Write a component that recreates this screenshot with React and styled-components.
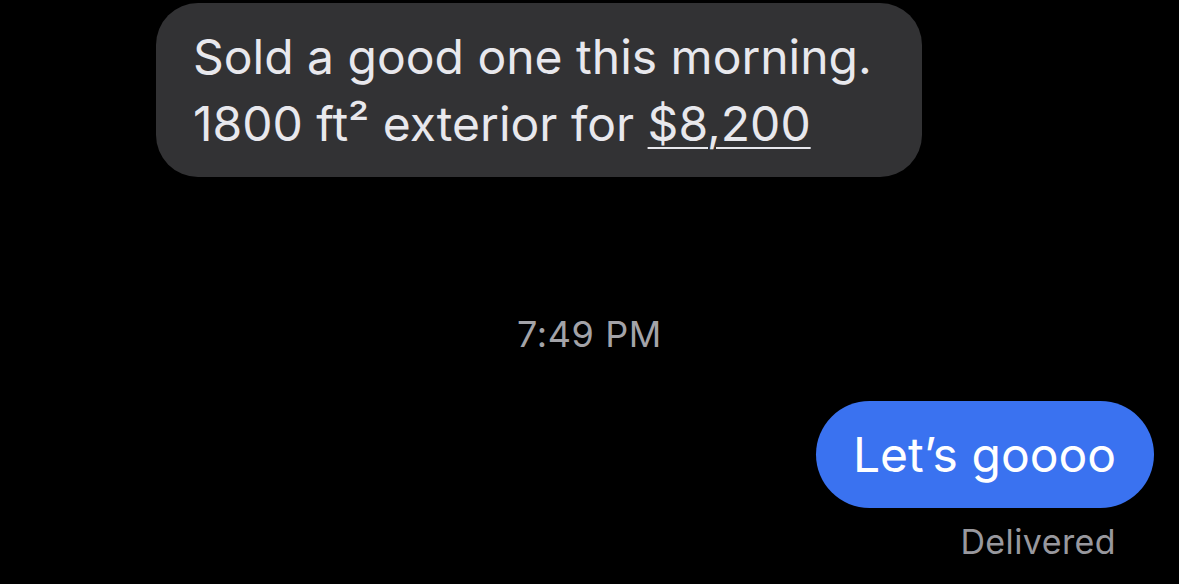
import React from 'react';
import styled, { createGlobalStyle } from 'styled-components';

const GlobalStyle = createGlobalStyle`
  html, body {
    margin: 0;
    padding: 0;
    background: #000;
  }
  body {
    font-family: Inter, "Noto Sans", "Liberation Sans", sans-serif;
    -webkit-font-smoothing: antialiased;
  }
`;

const Thread = styled.div`
  width: 1179px;
  height: 584px;
  overflow: hidden;
  background: #000;
  display: flex;
  flex-direction: column;
  padding-top: 3px;
  box-sizing: border-box;
`;

const Row = styled.div`
  display: flex;
  justify-content: ${(props) => (props.$outgoing ? 'flex-end' : 'flex-start')};
  padding: ${(props) => (props.$outgoing ? '0 25px 0 0' : '0 0 0 156px')};
`;

const Bubble = styled.div`
  box-sizing: border-box;
  font-size: 48px;
  line-height: 67px;
  letter-spacing: 0;
  border-radius: ${(props) => (props.$outgoing ? '54px' : '42px')};
  background: ${(props) => (props.$outgoing ? '#3a72f0' : '#323234')};
  color: ${(props) => (props.$outgoing ? '#ffffff' : '#e8e8ed')};
  padding: ${(props) => (props.$outgoing ? '20px 38px 20px 37px' : '20px 50px 20px 37px')};
`;

const Price = styled.span`
  text-decoration: underline;
  text-decoration-thickness: 2px;
  text-underline-offset: 6px;
`;

const Timestamp = styled.div`
  text-align: center;
  font-size: 36px;
  color: #a3a3a8;
  letter-spacing: 0.6px;
  margin: 135px 0 45px;
`;

const Status = styled.div`
  text-align: right;
  font-size: 34px;
  color: #98989e;
  letter-spacing: 0.4px;
  padding-right: 63px;
  margin-top: 13px;
`;

const App = () => (
  <>
    <GlobalStyle />
    <Thread>
      <Row>
        <Bubble>
          Sold a good one this morning.
          <br />
          1800 ft² exterior for <Price>$8,200</Price>
        </Bubble>
      </Row>
      <Timestamp>7:49 PM</Timestamp>
      <Row $outgoing>
        <Bubble $outgoing>Let’s goooo</Bubble>
      </Row>
      <Status>Delivered</Status>
    </Thread>
  </>
);

export default App;
